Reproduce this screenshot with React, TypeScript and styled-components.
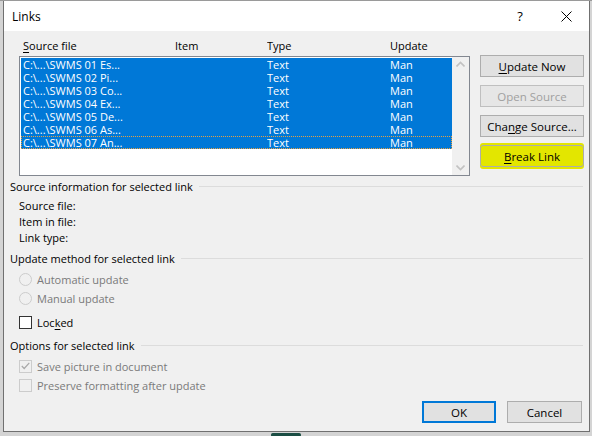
import React from "react";
import styled, { createGlobalStyle } from "styled-components";

const Global = createGlobalStyle`
  html, body { margin: 0; padding: 0; }
  body {
    width: 592px; height: 436px; overflow: hidden;
    background: #d4d4d4;
    font-family: "Open Sans", "Noto Sans", sans-serif;
    font-size: 11px;
    color: #000;
  }
`;

const Screen = styled.div`
  position: relative;
  width: 592px;
  height: 436px;
  border-top: 1px solid #9a9a9a;
  box-sizing: border-box;
`;

const BackShape = styled.div`
  position: absolute;
  left: 271px;
  top: 432px;
  width: 30px;
  height: 8px;
  border-radius: 4px 4px 14px 14px;
  background: #1c4e44;
`;

const Dialog = styled.div`
  position: relative;
  margin-left: 3px;
  width: 587px;
  height: 431px;
  box-sizing: border-box;
  border: 1px solid #707070;
  border-top: none;
  background: #f0f0f0;
  display: flex;
  flex-direction: column;
`;

const TitleBar = styled.div`
  height: 30px;
  background: #fff;
  display: flex;
  align-items: center;
  padding-left: 8px;
`;

const Title = styled.div`
  flex: 1;
  font-size: 12px;
`;

const TitleButton = styled.div`
  width: 46px;
  height: 30px;
  display: flex;
  align-items: center;
  justify-content: center;
  font-size: 13px;
`;

const Body = styled.div`
  flex: 1;
  display: flex;
  flex-direction: column;
  padding: 4px 5px 0 6px;
`;

const Top = styled.div`
  display: flex;
  gap: 10px;
  padding-left: 9px;
`;

const ListCol = styled.div`
  width: 451px;
  display: flex;
  flex-direction: column;
`;

const HeaderRow = styled.div`
  display: flex;
  height: 21px;
  align-items: center;
  padding-left: 4px;
`;

const Cell = styled.div<{ $w: number }>`
  width: ${(p) => p.$w}px;
  flex: none;
  white-space: nowrap;
  overflow: hidden;
`;

const ListBox = styled.div`
  height: 120px;
  box-sizing: border-box;
  border: 1px solid #828790;
  background: #fff;
  display: flex;
  padding: 0 0 0 1px;
`;

const Rows = styled.div`
  flex: 1;
  padding-top: 1px;
`;

const Row = styled.div<{ $focus?: boolean }>`
  display: flex;
  height: 13px;
  line-height: 13px;
  background: #0078d7;
  color: #fff;
  padding-left: 2px;
  box-sizing: border-box;
  outline: ${(p) => (p.$focus ? "1px dotted #e8a040" : "none")};
  outline-offset: -1px;
`;

const Scroll = styled.div`
  width: 17px;
  background: #f0f0f0;
  display: flex;
  flex-direction: column;
  justify-content: space-between;
  align-items: center;
  padding: 4px 0;
`;

const Buttons = styled.div`
  display: flex;
  flex-direction: column;
  gap: 8px;
  padding-top: 20px;
`;

const Button = styled.div<{ $disabled?: boolean; $hl?: boolean; $default?: boolean; $w?: number }>`
  width: ${(p) => p.$w ?? 104}px;
  height: 22px;
  box-sizing: border-box;
  display: flex;
  align-items: center;
  justify-content: center;
  background: ${(p) => (p.$hl ? "#e3e600" : p.$disabled ? "#e6e6e6" : "#e1e1e1")};
  border: ${(p) => (p.$default ? "2px solid #0078d7" : p.$disabled ? "1px solid #bfbfbf" : "1px solid #adadad")};
  color: ${(p) => (p.$disabled ? "#a0a0a0" : "#000")};
  font-size: 11.5px;
  border-radius: ${(p) => (p.$hl ? "3px" : "0")};
  box-shadow: ${(p) => (p.$hl ? "0 -2px 0 #e3e600, 0 2px 0 #e3e600" : "none")};
`;

const U = styled.span`
  text-decoration: underline;
  text-underline-offset: 2px;
`;

const SectionHead = styled.div<{ $mt: number }>`
  display: flex;
  align-items: center;
  gap: 6px;
  margin-top: ${(p) => p.$mt}px;
  height: 16px;
  &::after {
    content: "";
    flex: 1;
    height: 1px;
    background: #dcdcdc;
    margin-right: 1px;
  }
`;

const InfoList = styled.div`
  display: flex;
  flex-direction: column;
  padding-left: 9px;
  margin-top: 4px;
`;

const InfoLine = styled.div`
  height: 16px;
  line-height: 16px;
`;

const Option = styled.div<{ $disabled?: boolean; $mt: number }>`
  display: flex;
  align-items: center;
  gap: 5px;
  padding-left: 9px;
  height: 16px;
  margin-top: ${(p) => p.$mt}px;
  color: ${(p) => (p.$disabled ? "#7a7a7a" : "#000")};
`;

const Label = styled.span`
  white-space: nowrap;
`;

const Radio = styled.div`
  width: 11px;
  height: 11px;
  border-radius: 50%;
  border: 1px solid #cccccc;
  background: #f0f0f0;
`;

const Check = styled.div<{ $disabled?: boolean }>`
  width: 11px;
  height: 11px;
  border: 1px solid ${(p) => (p.$disabled ? "#cccccc" : "#333333")};
  background: ${(p) => (p.$disabled ? "#f0f0f0" : "#fff")};
  display: flex;
  align-items: center;
  justify-content: center;
`;

const Footer = styled.div`
  display: flex;
  justify-content: flex-end;
  gap: 11px;
  margin-top: auto;
  padding: 0 2px 8px 0;
`;

const rows = [
  "C:\\...\\SWMS 01 Es...",
  "C:\\...\\SWMS 02 Pi...",
  "C:\\...\\SWMS 03 Co...",
  "C:\\...\\SWMS 04 Ex...",
  "C:\\...\\SWMS 05 De...",
  "C:\\...\\SWMS 06 As...",
  "C:\\...\\SWMS 07 An...",
];

const Chevron = ({ up }: { up?: boolean }) => (
  <svg width="9" height="6" viewBox="0 0 9 6">
    <path
      d={up ? "M0.5 5.5 L4.5 1.5 L8.5 5.5" : "M0.5 0.5 L4.5 4.5 L8.5 0.5"}
      fill="none"
      stroke="#c2c2c2"
      strokeWidth="1.6"
    />
  </svg>
);

export default function App() {
  return (
    <>
      <Global />
      <Screen>
        <BackShape />
        <Dialog>
          <TitleBar>
            <Title>Links</Title>
            <TitleButton>?</TitleButton>
            <TitleButton>
              <svg width="11" height="11" viewBox="0 0 11 11">
                <path d="M0.5 0.5 L10.5 10.5 M10.5 0.5 L0.5 10.5" stroke="#000" strokeWidth="1" />
              </svg>
            </TitleButton>
          </TitleBar>
          <Body>
            <Top>
              <ListCol>
                <HeaderRow>
                  <Cell $w={152}>
                    <U>S</U>ource file
                  </Cell>
                  <Cell $w={92}>Item</Cell>
                  <Cell $w={123}>Type</Cell>
                  <Cell $w={60}>Update</Cell>
                </HeaderRow>
                <ListBox>
                  <Rows>
                    {rows.map((r, i) => (
                      <Row key={r} $focus={i === rows.length - 1}>
                        <Cell $w={244}>{r}</Cell>
                        <Cell $w={123}>Text</Cell>
                        <Cell $w={50}>Man</Cell>
                      </Row>
                    ))}
                  </Rows>
                  <Scroll>
                    <Chevron up />
                    <Chevron />
                  </Scroll>
                </ListBox>
              </ListCol>
              <Buttons>
                <Button>
                  <Label>
                    <U>U</U>pdate Now
                  </Label>
                </Button>
                <Button $disabled>Open Source</Button>
                <Button>
                  <Label>
                    Cha<U>n</U>ge Source...
                  </Label>
                </Button>
                <Button $hl>
                  <Label>
                    <U>B</U>reak Link
                  </Label>
                </Button>
              </Buttons>
            </Top>
            <SectionHead $mt={2}>Source information for selected link</SectionHead>
            <InfoList>
              <InfoLine>Source file:</InfoLine>
              <InfoLine>Item in file:</InfoLine>
              <InfoLine>Link type:</InfoLine>
            </InfoList>
            <SectionHead $mt={4}>Update method for selected link</SectionHead>
            <Option $disabled $mt={5}>
              <Radio />
              <Label>Automatic update</Label>
            </Option>
            <Option $disabled $mt={3}>
              <Radio />
              <Label>Manual update</Label>
            </Option>
            <Option $mt={8}>
              <Check />
              <Label>
                Loc<U>k</U>ed
              </Label>
            </Option>
            <SectionHead $mt={7}>Options for selected link</SectionHead>
            <Option $disabled $mt={5}>
              <Check $disabled>
                <svg width="9" height="8" viewBox="0 0 9 8">
                  <path d="M0.8 4 L3.2 6.5 L8.3 0.8" fill="none" stroke="#a8a8a8" strokeWidth="1.2" />
                </svg>
              </Check>
              <Label>Save picture in document</Label>
            </Option>
            <Option $disabled $mt={3}>
              <Check $disabled />
              <Label>Preserve formatting after update</Label>
            </Option>
            <Footer>
              <Button $default $w={74}>
                OK
              </Button>
              <Button $w={75}>Cancel</Button>
            </Footer>
          </Body>
        </Dialog>
      </Screen>
    </>
  );
}
